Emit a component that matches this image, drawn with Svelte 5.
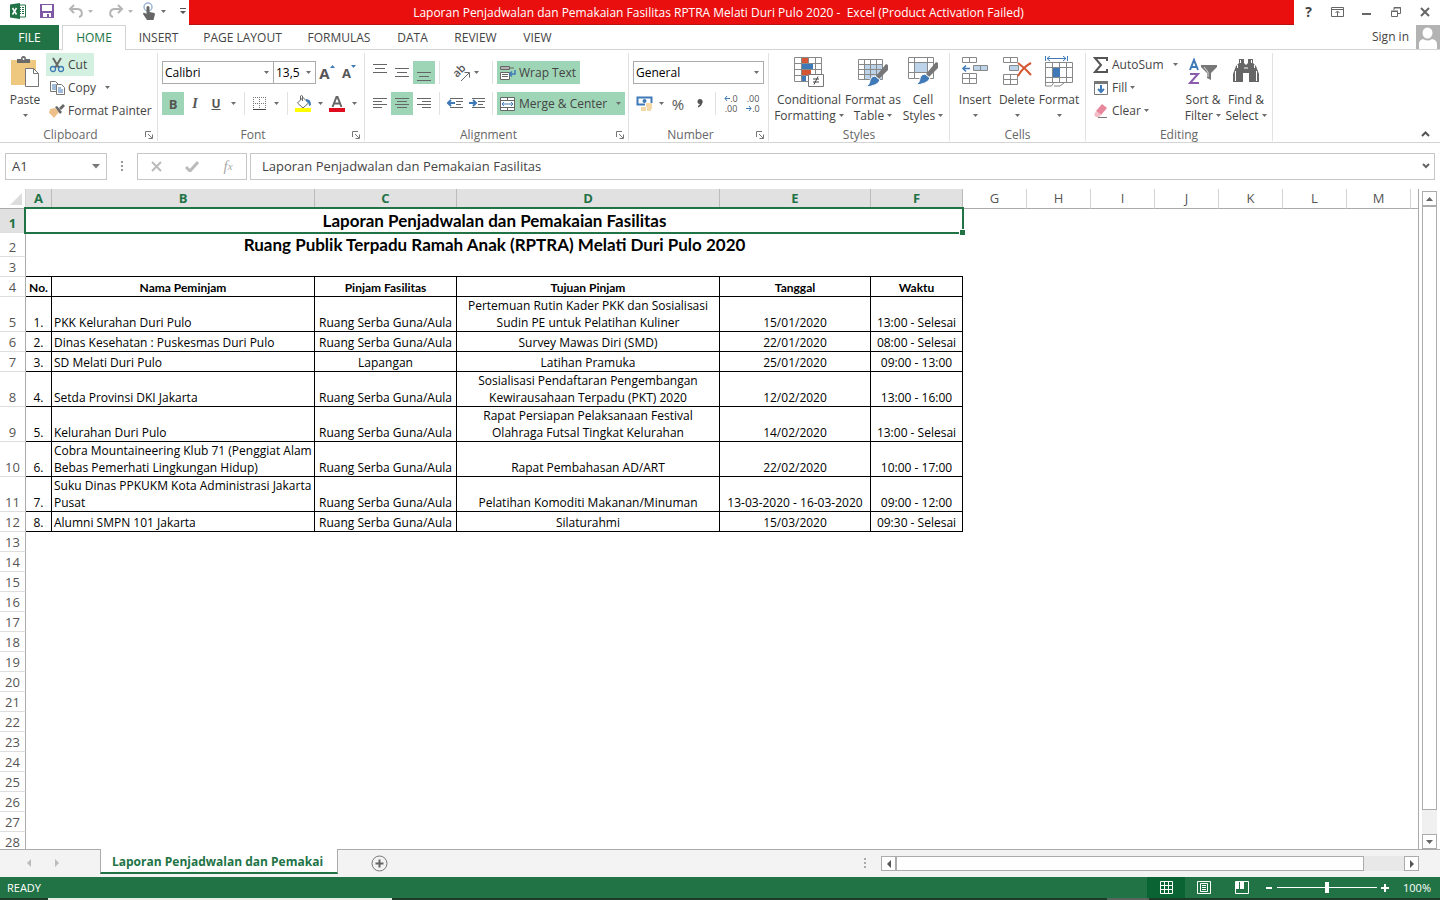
<script>
  const tabs = ['HOME', 'INSERT', 'PAGE LAYOUT', 'FORMULAS', 'DATA', 'REVIEW', 'VIEW'];
  const selectedColumns = ['A', 'B', 'C', 'D', 'E', 'F'];
  const otherColumns = ['G', 'H', 'I', 'J', 'K', 'L', 'M'];
  const headings = ['No.', 'Nama Peminjam', 'Pinjam Fasilitas', 'Tujuan Pinjam', 'Tanggal', 'Waktu'];
  const aula = 'Ruang Serba Guna/Aula';
  const rows = [
    ['PKK Kelurahan Duri Pulo', aula, 'Pertemuan Rutin Kader PKK dan Sosialisasi\nSudin PE untuk Pelatihan Kuliner', '15/01/2020', '13:00 - Selesai'],
    ['Dinas Kesehatan : Puskesmas Duri Pulo', aula, 'Survey Mawas Diri (SMD)', '22/01/2020', '08:00 - Selesai'],
    ['SD Melati Duri Pulo', 'Lapangan', 'Latihan Pramuka', '25/01/2020', '09:00 - 13:00'],
    ['Setda Provinsi DKI Jakarta', aula, 'Sosialisasi Pendaftaran Pengembangan\nKewirausahaan Terpadu (PKT) 2020', '12/02/2020', '13:00 - 16:00'],
    ['Kelurahan Duri Pulo', aula, 'Rapat Persiapan Pelaksanaan Festival\nOlahraga Futsal Tingkat Kelurahan', '14/02/2020', '13:00 - Selesai'],
    ['Cobra Mountaineering Klub 71 (Penggiat Alam\nBebas Pemerhati Lingkungan Hidup)', aula, 'Rapat Pembahasan AD/ART', '22/02/2020', '10:00 - 17:00'],
    ['Suku Dinas PPKUKM Kota Administrasi Jakarta\nPusat', aula, 'Pelatihan Komoditi Makanan/Minuman', '13-03-2020 - 16-03-2020', '09:00 - 12:00'],
    ['Alumni SMPN 101 Jakarta', aula, 'Silaturahmi', '15/03/2020', '09:30 - Selesai']
  ];
  const emptyRows = Array.from({ length: 16 }, (_, i) => i + 13);
  let zoom = $state(50);
  let formula = $state('Laporan Penjadwalan dan Pemakaian Fasilitas');
</script>

{#snippet caret()}
  <svg class="caret" width="5" height="3" viewBox="0 0 5 3"><path d="M0 0h5L2.500 3z" fill="#6d6d6d" /></svg>
{/snippet}

{#snippet launcher(name)}
  <button class="launcher" aria-label={name}>
    <svg width="8" height="8" viewBox="0 0 8 8" fill="none" stroke="#777"><path d="M.5 6V.5H6M3 3l4 4M7.500 3.500v4h-4" /></svg>
  </button>
{/snippet}

{#snippet lines(widths, align)}
  <svg width="14" height="11" viewBox="0 0 14 11" fill="#666">
    {#each widths as w, i}
      <rect x={align === 'left' ? 0 : align === 'right' ? 14 - w : (14 - w) / 2} y={widths.length === 3 ? i * 4 + 1 : i * 3} width={w} height="1" />
    {/each}
  </svg>
{/snippet}

<div class="app">
  <header class="titlebar">
    <div class="quick">
      <svg width="16" height="16" viewBox="0 0 16 16">
        <path d="M8 2h7.500v12H8" fill="#fff" stroke="#217346" />
        <path d="M9 4h2v1H9zm3 0h2v1h-2zM9 6h2v1H9zm3 0h2v1h-2zM9 8h2v1H9zm3 0h2v1h-2zM9 10h2v1H9zm3 0h2v1h-2z" fill="#217346" />
        <path d="M0 1.500L10 0v16L0 14.500z" fill="#217346" />
        <path d="M2.500 5l4 6.500M6.500 5l-4 6.500" stroke="#fff" stroke-width="1.500" />
      </svg>
      <button aria-label="Save">
        <svg width="14" height="14" viewBox="0 0 14 14"><path d="M0 0h14v14H0z" fill="#7e57a5" /><path d="M2 1h10v6H2zM3 9h8v4H9v-3H7v3H3z" fill="#fff" /></svg>
      </button>
      <button aria-label="Undo">
        <svg width="16" height="14" viewBox="0 0 16 14" fill="none" stroke="#b5b5b5" stroke-width="2"><path d="M6 1L2 5l4 4M2 5h7c6 0 6 7 2 8" /></svg>
      </button>
      <button class="dim" aria-label="Undo history">{@render caret()}</button>
      <button aria-label="Redo">
        <svg width="16" height="14" viewBox="0 0 16 14" fill="none" stroke="#b5b5b5" stroke-width="2"><path d="M10 1l4 4-4 4M14 5H7c-6 0-6 7-2 8" /></svg>
      </button>
      <button class="dim" aria-label="Redo history">{@render caret()}</button>
      <button aria-label="Touch or mouse mode">
        <svg width="14" height="18" viewBox="0 0 14 18"><circle cx="6" cy="5" r="4" fill="none" stroke="#9db6d2" stroke-width="1.500" /><path d="M4.500 5q1.500-2 3 0v5l5 1q1 1 0 3l-1 4H5l-4-6q0-2 2-1l1.500 1z" fill="#666" /></svg>
      </button>
      <button aria-label="Touch or mouse options">{@render caret()}</button>
      <button aria-label="Customize toolbar">
        <svg width="6" height="7" viewBox="0 0 6 7" fill="#555"><path d="M0 0h6v1H0zM0 3h6L3 6z" /></svg>
      </button>
    </div>
    <div class="title">Laporan Penjadwalan dan Pemakaian Fasilitas RPTRA Melati Duri Pulo 2020 -&nbsp; Excel (Product Activation Failed)</div>
    <div class="window-buttons">
      <button class="help" aria-label="Help">?</button>
      <button aria-label="Ribbon display options">
        <svg width="13" height="10" viewBox="0 0 13 10" fill="none" stroke="#666"><path d="M.5.5h12v9H.5zM1 2.500h11M6.500 9V4.500M4.500 6l2-2 2 2" /></svg>
      </button>
      <button aria-label="Minimize"><svg width="9" height="10" viewBox="0 0 9 10"><path d="M0 6h9v2H0z" fill="#666" /></svg></button>
      <button aria-label="Restore"><svg width="10" height="10" viewBox="0 0 10 10" fill="none" stroke="#666"><path d="M.5 4.500h6v5h-6zM0 4h7M3 3V.5h6.500v6H7M3 1h7" /></svg></button>
      <button aria-label="Close"><svg width="10" height="10" viewBox="0 0 10 10" stroke="#666" stroke-width="2"><path d="M1 1l8 8M9 1L1 9" /></svg></button>
    </div>
  </header>

  <nav class="tabs">
    <button class="file">FILE</button>
    {#each tabs as tab, i}
      <button class="tab" class:active={i === 0}>{tab}</button>
    {/each}
    <div class="account">
      <a href="#signin">Sign in</a>
      <svg width="24" height="24" viewBox="0 0 24 24"><path d="M0 0h24v24H0z" fill="#b3b3b3" /><ellipse cx="11.500" cy="8" rx="5" ry="5.500" fill="#fff" /><path d="M3 24v-5q0-4 4-5 5 3 9 0 5 1 5 5v5z" fill="#fff" /></svg>
    </div>
  </nav>

  <div class="ribbon">
    <section class="group clipboard">
      <div class="body">
        <button class="big paste">
          <span class="icon">
            <svg width="30" height="32" viewBox="0 0 30 32">
              <path d="M1 4h25v25H1z" fill="#edc87e" />
              <path d="M7 7V3h4q0-3 2.500-3T16 3h4v4z" fill="#6b6b6b" /><circle cx="13.500" cy="3" r="1" fill="#fff" />
              <path d="M15.500 12.500h8l5 5v13h-13z" fill="#fff" stroke="#777" /><path d="M23.500 12.500v5h5" fill="none" stroke="#777" />
            </svg>
          </span>
          <span>Paste</span><span>{@render caret()}</span>
        </button>
        <div class="stack">
          <button class="small hot">
            <svg width="16" height="16" viewBox="0 0 16 16" fill="none"><path d="M4 1l6 10M12 1L6 11" stroke="#666" stroke-width="2" /><circle cx="4" cy="12" r="2.500" stroke="#3f79b7" stroke-width="1.300" /><circle cx="12" cy="12" r="2.500" stroke="#3f79b7" stroke-width="1.300" /></svg>Cut
          </button>
          <button class="small">
            <svg width="16" height="16" viewBox="0 0 16 16"><path d="M1.500 1.500h5l3 3v7h-8z" fill="#fff" stroke="#777" /><path d="M3 5h4M3 7h4M3 9h4" stroke="#3f79b7" /><path d="M7.500 4.500h5l3 3v7h-8z" fill="#fff" stroke="#777" /><path d="M9 8h3M9 10h5M9 12h5" stroke="#3f79b7" /></svg>Copy <span class="far">{@render caret()}</span>
          </button>
          <button class="small painter">
            <svg width="16" height="16" viewBox="0 0 16 16"><path d="M1 6l5-1 4 4-5 6q-2-3-5-5z" fill="#edc08a" /><path d="M6 4l2-1 5 6-2 2z" fill="#666" /><path d="M10 5l4-4 2 2-4 4z" fill="#666" /></svg>Format Painter
          </button>
        </div>
      </div>
      <footer><span>Clipboard</span>{@render launcher('Clipboard settings')}</footer>
    </section>

    <section class="group font">
      <div class="body tools">
        <div class="row">
          <label class="combo family"><select aria-label="Font"><option>Calibri</option></select>{@render caret()}</label>
          <label class="combo size"><select aria-label="Font size"><option>13,5</option></select>{@render caret()}</label>
          <button class="tool grow" aria-label="Increase font size"><b>A</b><svg width="5" height="3" viewBox="0 0 5 3"><path d="M0 3h5L2.500 0z" fill="#3f79b7" /></svg></button>
          <button class="tool shrink" aria-label="Decrease font size"><b>A</b><svg width="5" height="3" viewBox="0 0 5 3"><path d="M0 0h5L2.500 3z" fill="#3f79b7" /></svg></button>
        </div>
        <div class="row">
          <button class="tool on" aria-label="Bold"><b>B</b></button>
          <button class="tool italic" aria-label="Italic">I</button>
          <button class="tool underline" aria-label="Underline">U</button>
          <button class="drop" aria-label="Underline options">{@render caret()}</button>
          <i class="sep"></i>
          <button class="tool borders" aria-label="Borders"><svg width="13" height="13" viewBox="0 0 13 13" fill="none" stroke="#777"><path d="M0 .5h13M0 6.500h13M.5 0v12M6.500 0v12M12.500 0v12" stroke-dasharray="1 1" /><path d="M0 12.500h13" stroke="#444" /></svg></button>
          <button class="drop" aria-label="Border options">{@render caret()}</button>
          <i class="sep"></i>
          <button class="tool" aria-label="Fill color"><svg width="18" height="17" viewBox="0 0 18 17"><path d="M1 13h16v4H1z" fill="#ff0" /><path d="M3.500 8L9 2.500 14.500 8 9 13z" fill="#fff" stroke="#666" /><path d="M8.500 6V1q-1-1-2 0v4" fill="none" stroke="#666" /><path d="M12 4q5 0 5 6l-2 1q0-4-3-5z" fill="#3f79b7" /></svg></button>
          <button class="drop near" aria-label="Fill options">{@render caret()}</button>
          <button class="tool" aria-label="Font color"><svg width="16" height="17" viewBox="0 0 16 17"><path d="M0 13h16v4H0z" fill="#e00b1c" /><path d="M3.500 12L7.500 2h1l4 10M5 8.500h6" fill="none" stroke="#666" stroke-width="2" /></svg></button>
          <button class="drop near" aria-label="Font color options">{@render caret()}</button>
        </div>
      </div>
      <footer><span>Font</span>{@render launcher('Font settings')}</footer>
    </section>

    <section class="group alignment">
      <div class="body tools">
        <div class="row">
          <button class="tool top" aria-label="Top align">{@render lines([14, 10, 14], 'mid')}</button>
          <button class="tool" aria-label="Middle align">{@render lines([14, 10, 14], 'mid')}</button>
          <button class="tool low on" aria-label="Bottom align">{@render lines([14, 10, 14], 'mid')}</button>
          <i class="sep"></i>
          <button class="tool wide" aria-label="Orientation">
            <svg class="orientation" width="18" height="18" viewBox="0 0 18 18"><path d="M8 17l8-8M11.500 8.500h5v5" fill="none" stroke="#666" /><text x="4" y="14" transform="rotate(-45 4 14)" font-size="11" font-weight="600" fill="#555">ab</text></svg>{@render caret()}
          </button>
          <i class="sep"></i>
          <button class="labeled on">
            <svg width="16" height="16" viewBox="0 0 16 16"><path d="M.5 1.500h9v3h-9zM.5 7.500h9v7h-9z" fill="#fff" stroke="#666" /><path d="M0 3h9M9 3h5M2 9.500h6M2 11.500h6" stroke="#666" /><path d="M15 5v4h-5M12 6.500L9.500 9l2.500 2.500" fill="none" stroke="#3f79b7" stroke-width="1.500" /></svg>Wrap Text
          </button>
        </div>
        <div class="row">
          <button class="tool" aria-label="Align left">{@render lines([14, 9, 14, 9], 'left')}</button>
          <button class="tool on" aria-label="Center">{@render lines([14, 10, 14, 10], 'mid')}</button>
          <button class="tool" aria-label="Align right">{@render lines([14, 9, 14, 9], 'right')}</button>
          <i class="sep"></i>
          <button class="tool" aria-label="Decrease indent"><svg width="16" height="11" viewBox="0 0 16 11"><path d="M3 .5h13M9 3.500h7M9 6.500h5M3 9.500h13" stroke="#666" /><path d="M8 5H1M4 2L1 5l3 3" fill="none" stroke="#3f79b7" stroke-width="2" /></svg></button>
          <button class="tool" aria-label="Increase indent"><svg width="16" height="11" viewBox="0 0 16 11"><path d="M3 .5h13M9 3.500h7M9 6.500h5M3 9.500h13" stroke="#666" /><path d="M0 5h7M4 2l3 3-3 3" fill="none" stroke="#3f79b7" stroke-width="2" /></svg></button>
          <i class="sep"></i>
          <button class="labeled on">
            <svg width="16" height="16" viewBox="0 0 16 16"><path d="M.5 1.500h14v13H.5zM0 4.500h15M0 11.500h15M7.500 1v3M7.500 12v3" fill="#fff" stroke="#666" /><path d="M2 8h11M4 6L2 8l2 2M11 6l2 2-2 2" fill="none" stroke="#3f79b7" /></svg>Merge &amp; Center <span class="far">{@render caret()}</span>
          </button>
        </div>
      </div>
      <footer><span>Alignment</span>{@render launcher('Alignment settings')}</footer>
    </section>

    <section class="group number">
      <div class="body tools">
        <div class="row">
          <label class="combo format"><select aria-label="Number format"><option>General</option></select>{@render caret()}</label>
        </div>
        <div class="row">
          <button class="tool" aria-label="Accounting format"><svg width="17" height="16" viewBox="0 0 17 16"><path d="M1.500 1.500h14v7h-14z" fill="#fff" stroke="#3f79b7" stroke-width="2" /><circle cx="8.500" cy="5" r="2" fill="#3f79b7" /><path d="M9 7h8v9H5v-4h4z" fill="#fff" /><path d="M10 8h6M10 10h6M5 12h5M5 14h5M11 12h5M11 14h4" stroke="#e8b050" /></svg></button>
          <button class="drop near" aria-label="Currency options">{@render caret()}</button>
          <button class="tool percent" aria-label="Percent">%</button>
          <button class="tool" aria-label="Comma style"><svg width="6" height="10" viewBox="0 0 6 10"><circle cx="3" cy="2.500" r="2.500" fill="#555" /><path d="M5.500 2q0 5-4.500 6.500V7q2-1 2-3z" fill="#555" /></svg></button>
          <i class="sep"></i>
          <button class="tool decimal" aria-label="Increase decimal"><span><svg width="6" height="5" viewBox="0 0 6 5"><path d="M6 2.500H1M3 0L1 2.500 3 5" fill="none" stroke="#3f79b7" /></svg>.0</span><span>.00</span></button>
          <button class="tool decimal" aria-label="Decrease decimal"><span>.00</span><span><svg width="6" height="5" viewBox="0 0 6 5"><path d="M0 2.500h5M3 0l2 2.500L3 5" fill="none" stroke="#3f79b7" /></svg>.0</span></button>
        </div>
      </div>
      <footer><span>Number</span>{@render launcher('Number settings')}</footer>
    </section>

    <section class="group styles">
      <div class="body">
        <button class="big conditional">
          <span class="icon">
            <svg width="30" height="32" viewBox="0 0 30 32"><path d="M.5 1.500h27v24H.5zM0 7.500h28M0 13.500h28M0 19.500h28M7.500 1v25M14.500 1v25M21.500 1v25" fill="#fff" stroke="#888" /><path d="M8 2h6v5H8zM8 14h9v5H8z" fill="#d65532" /><path d="M8 8h11v5H8z" fill="#3f79b7" /><path d="M8 20h4v5H8z" fill="#3f79b7" /><path d="M14.500 18.500h15v12h-15z" fill="#fff" stroke="#777" /><path d="M19 23h6M19 26h6M24 20.500l-4 8" stroke="#444" /></svg>
          </span>
          <span>Conditional</span><span>Formatting {@render caret()}</span>
        </button>
        <button class="big as-table">
          <span class="icon">
            <svg width="30" height="32" viewBox="0 0 30 32"><path d="M7 9h18v14H7z" fill="#bdd3ea" /><path d="M.5 3.500h24v20H.5zM0 8.500h25M0 13.500h25M0 18.500h25M6.500 3v21M12.500 3v21M18.500 3v21" fill="none" stroke="#888" /><path d="M28 8l2 1v5l-9 9-3-3z" fill="#777" /><path d="M17 20l5 4q-2 6-15 7 5-2 5-7 1-4 5-4z" fill="#3f79b7" stroke="#fff" /></svg>
          </span>
          <span>Format as</span><span>Table {@render caret()}</span>
        </button>
        <button class="big cell-styles">
          <span class="icon">
            <svg width="30" height="32" viewBox="0 0 30 32"><path d="M.5 1.500h25v21H.5zM0 6.500h26M0 16.500h26M6.500 1v22M19.500 1v22" fill="#fff" stroke="#888" /><path d="M7 7h12v9H7z" fill="#bdd3ea" /><path d="M28 6l2 1v5l-9 9-3-3z" fill="#777" /><path d="M17 18l5 4q-2 6-15 7 5-2 5-7 1-4 5-4z" fill="#3f79b7" stroke="#fff" /></svg>
          </span>
          <span>Cell</span><span>Styles {@render caret()}</span>
        </button>
      </div>
      <footer><span>Styles</span></footer>
    </section>

    <section class="group cells">
      <div class="body">
        <button class="big">
          <span class="icon">
            <svg width="28" height="32" viewBox="0 0 28 32" fill="#fff" stroke="#888"><path d="M1.500 1.500h14v5h-14zM8.500 1v6M1.500 17.500h14v10h-14zM1 22.500h15M8.500 17v11" /><path d="M12.500 9.500h14v5h-14zM19.500 9v6" fill="#bdd3ea" /><path d="M9 12.500H2M5 9.500l-3 3 3 3" fill="none" stroke="#3f79b7" stroke-width="1.500" /></svg>
          </span>
          <span>Insert</span><span>{@render caret()}</span>
        </button>
        <button class="big">
          <span class="icon">
            <svg width="30" height="32" viewBox="0 0 30 32" fill="#fff" stroke="#888"><path d="M1.500 1.500h14v5h-14zM8.500 1v6M1.500 18.500h14v10h-14zM1 23.500h15M8.500 18v11" /><path d="M7.500 9.500h9v5h-9z" fill="#bdd3ea" /><path d="M16 7q7 5 13 12M29 7q-8 4-13 13" fill="none" stroke="#d65532" stroke-width="2" /></svg>
          </span>
          <span>Delete</span><span>{@render caret()}</span>
        </button>
        <button class="big">
          <span class="icon">
            <svg width="28" height="32" viewBox="0 0 28 32" fill="none" stroke="#888"><path d="M.5 6.500h27v20H.5zM0 11.500h28M0 21.500h28M7.500 6v21M14.500 6v21M21.500 6v21M.5 26v4h6l2-3M9 30h6l4-3" /><path d="M8 12h7v9H8z" fill="#3f79b7" stroke="none" /><path d="M.5 0v5M22.500 0v5M2 2.500h19M5 0L2 2.500 5 5M18 0l3 2.500L18 5" stroke="#3f79b7" /></svg>
          </span>
          <span>Format</span><span>{@render caret()}</span>
        </button>
      </div>
      <footer><span>Cells</span></footer>
    </section>

    <section class="group editing">
      <div class="body">
        <div class="stack">
          <button class="small">
            <svg width="16" height="16" viewBox="0 0 16 16"><path d="M14 4V1H2l6 7-6 7h12v-3" fill="none" stroke="#555" stroke-width="2" /></svg>AutoSum <span class="far">{@render caret()}</span>
          </button>
          <button class="small">
            <svg width="16" height="16" viewBox="0 0 16 16"><path d="M1.500 1.500h13v13h-13z" fill="#fff" stroke="#777" /><path d="M1 1h14v3H1z" fill="#777" /><path d="M8 5v7M5 9l3 3 3-3" fill="none" stroke="#3f79b7" stroke-width="2" /></svg>Fill {@render caret()}
          </button>
          <button class="small">
            <svg width="16" height="16" viewBox="0 0 16 16"><path d="M9 1l5 4-6 7-5-4z" fill="#e8879b" /><path d="M3 8l5 4-2 2H3l-2-2z" fill="#f3bcc7" /><path d="M5 14.500h9" stroke="#777" /></svg>Clear {@render caret()}
          </button>
        </div>
        <button class="big sort">
          <span class="icon">
            <svg width="30" height="32" viewBox="0 0 30 32" fill="none"><path d="M2 14L6 4l4 10M3 11h6" stroke="#3f79b7" stroke-width="2" /><path d="M2 18h8l-8 9h9" stroke="#8a5cae" stroke-width="2" /><path d="M13 9h16v2l-6 6v7l-4-2v-5l-6-6z" fill="#777" /><path d="M16 11l4 5v5" stroke="#ddd" /></svg>
          </span>
          <span>Sort &amp;</span><span>Filter {@render caret()}</span>
        </button>
        <button class="big find">
          <span class="icon">
            <svg width="26" height="32" viewBox="0 0 26 32" fill="#666"><path d="M6 3h5v4l2 2 2-2V3h5v4l3 3 3 8v8H16v-9h-6v9H0v-8l3-8 3-3z" /><path d="M7.500 4v3M4.500 9v3M2.500 15v10M18.500 4v3M21.500 9v3M23.500 15v10M11 12h4" stroke="#fff" /></svg>
          </span>
          <span>Find &amp;</span><span>Select {@render caret()}</span>
        </button>
      </div>
      <footer><span>Editing</span></footer>
    </section>
    <button class="collapse" aria-label="Collapse ribbon"><svg width="9" height="6" viewBox="0 0 9 6"><path d="M1 5l3.500-3.500L8 5" fill="none" stroke="#555" stroke-width="2" /></svg></button>
  </div>

  <div class="formula-bar">
    <div class="name-box"><input aria-label="Name box" value="A1" /><button aria-label="Names"><svg width="8" height="5" viewBox="0 0 8 5"><path d="M0 0h8L4 4.500z" fill="#777" /></svg></button></div>
    <svg class="dots" width="2" height="11" viewBox="0 0 2 11" fill="#999"><path d="M0 0h2v2H0zM0 4h2v2H0zM0 8h2v2H0z" /></svg>
    <div class="entry">
      <button aria-label="Cancel"><svg width="11" height="11" viewBox="0 0 11 11"><path d="M1 1l9 9M10 1l-9 9" stroke="#bbb" stroke-width="2" /></svg></button>
      <button aria-label="Enter"><svg width="14" height="11" viewBox="0 0 14 11"><path d="M1 6l4 4 8-9" fill="none" stroke="#bbb" stroke-width="3" /></svg></button>
      <button class="fx" aria-label="Insert function">f<sub>x</sub></button>
    </div>
    <div class="formula"><input aria-label="Formula" bind:value={formula} /><button aria-label="Expand formula bar"><svg width="8" height="6" viewBox="0 0 8 6"><path d="M1 1l3 3 3-3" fill="none" stroke="#666" stroke-width="2" /></svg></button></div>
  </div>

  <div class="workspace">
    <div class="sheet">
      <table>
        <colgroup>
          <col class="w-rows" /><col class="w-a" /><col class="w-b" /><col class="w-c" /><col class="w-b" /><col class="w-e" /><col class="w-f" />
          {#each otherColumns as c}<col class="w-other" />{/each}
          <col />
        </colgroup>
        <thead>
          <tr>
            <th class="corner" aria-label="Select all"><svg width="12" height="12" viewBox="0 0 12 12"><path d="M12 0v12H0z" fill="#dcdcdc" /></svg></th>
            {#each selectedColumns as c}<th class="picked" scope="col">{c}</th>{/each}
            {#each otherColumns as c}<th scope="col">{c}</th>{/each}
            <th class="rest"></th>
          </tr>
        </thead>
        <tbody>
          <tr class="headline"><th class="picked" scope="row">1</th><td class="merged selected" colspan="6">Laporan Penjadwalan dan Pemakaian Fasilitas</td></tr>
          <tr class="headline"><th scope="row">2</th><td class="merged" colspan="6">Ruang Publik Terpadu Ramah Anak (RPTRA) Melati Duri Pulo 2020</td></tr>
          <tr><th scope="row">3</th><td class="above" colspan="6"></td></tr>
          <tr class="data heads"><th scope="row">4</th>{#each headings as h}<td>{h}</td>{/each}</tr>
          {#each rows as row, i}
            <tr class="data"><th scope="row">{i + 5}</th><td>{i + 1}.</td>{#each row as cell, j}<td class:left={j === 0}>{cell}</td>{/each}</tr>
          {/each}
          {#each emptyRows as n}<tr><th scope="row">{n}</th></tr>{/each}
        </tbody>
      </table>
    </div>
    <div class="vscroll">
      <button aria-label="Scroll up"><svg width="7" height="4" viewBox="0 0 7 4"><path d="M0 4h7L3.500 0z" fill="#666" /></svg></button>
      <div class="thumb"></div>
      <div class="track"></div>
      <button aria-label="Scroll down"><svg width="7" height="4" viewBox="0 0 7 4"><path d="M0 0h7L3.500 4z" fill="#666" /></svg></button>
    </div>
  </div>

  <div class="sheetbar">
    <div class="arrows">
      <button aria-label="Previous sheet"><svg width="4" height="8" viewBox="0 0 4 8"><path d="M4 0v8L0 4z" fill="#bbb" /></svg></button>
      <button aria-label="Next sheet"><svg width="4" height="8" viewBox="0 0 4 8"><path d="M0 0v8l4-4z" fill="#bbb" /></svg></button>
    </div>
    <button class="sheet-tab">Laporan Penjadwalan dan Pemakai</button>
    <button class="add" aria-label="New sheet"><svg width="17" height="17" viewBox="0 0 17 17" fill="none" stroke="#777"><circle cx="8.500" cy="8.500" r="7.500" /><path d="M8.500 4.500v8M4.500 8.500h8" stroke="#666" stroke-width="2" /></svg></button>
    <div class="hscroll">
      <svg width="2" height="11" viewBox="0 0 2 11" fill="#aaa"><path d="M0 0h2v2H0zM0 4h2v2H0zM0 8h2v2H0z" /></svg>
      <button class="first" aria-label="Scroll left"><svg width="4" height="8" viewBox="0 0 4 8"><path d="M4 0v8L0 4z" fill="#555" /></svg></button>
      <div class="thumb"></div>
      <div class="track"></div>
      <button aria-label="Scroll right"><svg width="4" height="8" viewBox="0 0 4 8"><path d="M0 0v8l4-4z" fill="#555" /></svg></button>
    </div>
  </div>

  <footer class="status">
    <span>READY</span>
    <div class="views">
      <button class="current" aria-label="Normal view"><svg width="13" height="13" viewBox="0 0 13 13" fill="none" stroke="#fff"><path d="M.5.5h12v12H.5zM0 4.500h13M0 8.500h13M4.500 0v13M8.500 0v13" /></svg></button>
      <button aria-label="Page layout view"><svg width="14" height="13" viewBox="0 0 14 13" fill="none" stroke="#fff"><path d="M.5.5h13v12H.5zM3.500 2.500h7v8h-7zM5 4.500h4M5 6.500h4M5 8.500h4" /></svg></button>
      <button aria-label="Page break preview"><svg width="14" height="13" viewBox="0 0 14 13"><path d="M.5.5h13v12H.5z" fill="none" stroke="#fff" /><path d="M1 1h3v7H1zM5 1h4v7H5z" fill="#fff" /></svg></button>
    </div>
    <button class="step" aria-label="Zoom out"><svg width="8" height="8" viewBox="0 0 8 8"><path d="M1 3h6v2H1z" fill="#fff" /></svg></button>
    <input type="range" aria-label="Zoom" bind:value={zoom} />
    <button class="step" aria-label="Zoom in"><svg width="8" height="8" viewBox="0 0 8 8"><path d="M0 3h3V0h2v3h3v2H5v3H3V5H0z" fill="#fff" /></svg></button>
    <span class="percent-label">100%</span>
  </footer>
  <div class="taskbar-edge"><i></i><i class="light"></i><i></i><i class="mid"></i><i class="end"></i></div>
</div>

<style>
  :global(body) { margin: 0; overflow: hidden; }
  .app { display: flex; flex-direction: column; height: 100vh; overflow: hidden; background: #fff; color: #444; font: 12px/16px "Open Sans", "Noto Sans", sans-serif; }
  .app *, .app *::before, .app *::after { box-sizing: border-box; }
  button, input, select { margin: 0; padding: 0; border: 0; background: none; color: inherit; font: inherit; border-radius: 0; outline: 0; }
  button { display: flex; align-items: center; justify-content: center; white-space: nowrap; }
  svg { display: block; flex: none; }
  a { color: inherit; text-decoration: none; }
  .caret { display: inline-block; vertical-align: 3px; }

  .titlebar { display: flex; flex: 0 0 25px; }
  .quick { display: grid; grid-template-columns: 30px 28px 20px 20px 20px 14px 19px 19px 9px; align-items: center; padding: 0 0 3px 10px; }
  .quick button { justify-content: flex-start; }
  .dim { opacity: .5; }
  .title { flex: 1; background: #ea0f0f; border-bottom: 1px solid #b51212; color: #fff; text-align: center; line-height: 22px; white-space: nowrap; overflow: hidden; padding: 2px 46px 0 0; }
  .window-buttons { display: grid; grid-template-columns: repeat(5, 29px); padding: 0 1px 2px 0; }
  .help { font-weight: 700; font-size: 14px; }

  .tabs { display: grid; grid-template-columns: 62px 64px 65px 103px 90px 57px 69px 55px 1fr; flex: 0 0 25px; border-bottom: 1px solid #d4d4d4; }
  .file { background: #217346; color: #fff; margin: 0 3px -1px 0; }
  .tab { padding-top: 1px; }
  .tab.active { padding-top: 0; border: 1px solid #d4d4d4; border-bottom: 0; margin-bottom: -1px; background: #fff; color: #217346; }
  .account { display: flex; justify-content: flex-end; align-items: center; gap: 7px; }

  .ribbon { display: flex; flex: 0 0 93px; border-bottom: 1px solid #d4d4d4; padding: 3px 0 1px; }
  .group { display: flex; flex-direction: column; min-width: 0; border-right: 1px solid #e1e1e1; padding-left: 4px; }
  .clipboard { flex: 0 0 158px; }
  .font { flex: 0 0 207px; }
  .alignment { flex: 0 0 264px; }
  .number { flex: 0 0 140px; }
  .styles { flex: 0 0 181px; }
  .cells { flex: 0 0 136px; }
  .editing { flex: 0 0 187px; }
  .body { display: flex; flex: 1; align-items: flex-start; }
  .tools { flex-direction: column; gap: 8px; padding-top: 8px; }
  .row { display: flex; height: 23px; }
  .group footer { display: flex; align-items: center; height: 14px; padding-top: 2px; color: #666; margin-left: -4px; }
  .group footer span { flex: 1; text-align: center; }
  .launcher { width: 16px; height: 12px; }

  .big { flex-direction: column; justify-content: flex-start; width: 42px; padding-top: 2px; }
  .big .icon { height: 37px; padding-top: 1px; display: flex; }
  .big.conditional { width: 72px; }
  .big.as-table { width: 56px; }
  .big.cell-styles, .big.sort { width: 44px; }
  .big > span { min-height: 16px; }
  .stack { display: flex; flex-direction: column; align-items: flex-start; }
  .editing .stack { width: 91px; }
  .small { height: 23px; padding: 0 7px 0 3px; gap: 3px; }
  .painter { padding-right: 0; }
  .hot { background: #d3f0e0; }
  .far { margin-left: 6px; }

  .tool { width: 22px; height: 23px; color: #555; }
  .on { background: #9fd5b7; }
  .top { padding-bottom: 8px; }
  .low { padding-top: 8px; }
  .italic { font: italic 700 14px/20px "Liberation Serif", serif; }
  .underline { width: 20px; font-weight: 700; text-decoration: underline; }
  .borders { width: 20px; }
  .tool b { font-size: 13px; }
  .grow, .shrink { align-items: flex-start; padding-top: 4px; }
  .tool.grow b { font-size: 15px; }
  .drop { width: 14px; height: 23px; }
  .drop.near { width: 12px; }
  .sep { width: 1px; margin: 0 4px; background: #e1e1e1; }
  .wide { width: 44px; gap: 3px; }
  .orientation { overflow: visible; }
  .labeled { padding: 0 4px 0 3px; gap: 3px; color: #444; }
  .percent { font-size: 15px; }
  .decimal { flex-direction: column; font-size: 9px; line-height: 10px; }
  .decimal span { display: flex; align-items: center; }

  .combo { display: grid; align-items: center; border: 1px solid #ababab; height: 23px; color: #000; }
  .combo select, .combo > :global(.caret) { grid-area: 1 / 1; }
  .combo select { appearance: none; width: 100%; padding-left: 2px; }
  .combo :global(.caret) { justify-self: end; margin-right: 4px; pointer-events: none; }
  .family { width: 112px; margin-right: -1px; }
  .size { width: 43px; }
  .format { width: 131px; }
  .collapse { margin-left: auto; align-self: flex-end; width: 29px; height: 14px; }

  .formula-bar { display: flex; align-items: center; flex: 0 0 46px; padding: 0 5px; font-size: 13px; }
  .name-box, .entry, .formula { display: flex; height: 27px; border: 1px solid #c6c6c6; }
  .name-box { width: 102px; }
  .name-box input { flex: 1; min-width: 0; padding-left: 6px; }
  .name-box button { width: 20px; }
  .dots { margin: 0 14px; }
  .entry { width: 110px; margin-right: 3px; }
  .entry button { flex: 1; }
  .fx { font: italic 15px/16px "Liberation Serif", serif; color: #aaa; }
  .fx sub { font-size: 11px; line-height: 8px; }
  .formula { flex: 1; }
  .formula input { flex: 1; padding-left: 11px; }
  .formula button { width: 16px; }

  .workspace { display: flex; flex: 1; min-height: 0; }
  .sheet { flex: 1; min-width: 0; overflow: hidden; }
  table { table-layout: fixed; width: 100%; border-spacing: 0; border-right: 1px solid #ababab; font: 12px/17px "Open Sans", "Noto Sans", sans-serif; color: #000; }
  .w-rows, .w-a { width: 26px; }
  .w-b { width: 263px; }
  .w-c { width: 142px; }
  .w-e { width: 151px; }
  .w-f { width: 92px; }
  .w-other { width: 64px; }
  th, td { padding: 0; height: 20px; }
  th { font: 13px/18px "Open Sans", "Noto Sans", sans-serif; color: #555; }
  thead th { vertical-align: top; border-right: 1px solid #d4d4d4; border-bottom: 1px solid #ababab; }
  thead .picked { background: #e1e1e1; color: #217346; font-weight: 700; border-right-color: #bbb; }
  thead .rest { border-right: 0; }
  .corner svg { margin: 4px 0 0 10px; }
  tbody th { vertical-align: bottom; border-right: 1px solid #ababab; border-bottom: 1px solid #dedede; }
  tbody th.picked { background: #e1e1e1; color: #217346; font-weight: 700; }
  .headline th, .headline td { height: 24px; }
  .merged { position: relative; vertical-align: middle; text-align: center; font: 700 17px/20px Lato, sans-serif; }
  .selected::after { content: ""; position: absolute; inset: -2px -1px -1px -2px; border: 2px solid #217346; }
  .selected::before { content: ""; position: absolute; right: -2px; bottom: -2px; z-index: 1; width: 5px; height: 5px; background: #217346; box-shadow: -1px -1px #fff; }
  .above { border-bottom: 1px solid #000; }
  .data td { vertical-align: bottom; text-align: center; white-space: pre; border-right: 1px solid #000; border-bottom: 1px solid #000; }
  .data td.left { text-align: left; padding-left: 2px; }
  .heads td { font-family: Lato, sans-serif; font-weight: 700; }

  .vscroll { display: flex; flex-direction: column; width: 21px; padding: 2px 3px 0; }
  .vscroll button { height: 15px; border: 1px solid #ababab; }
  .vscroll .thumb { flex: 1; border: 1px solid #ababab; }
  .vscroll .track { flex: 0 0 24px; background: #f0f0f0; }

  .sheetbar { display: flex; flex: 0 0 28px; background: #f3f3f3; border-top: 1px solid #ababab; }
  .arrows { display: flex; width: 100px; padding-left: 15px; }
  .arrows button { width: 28px; height: 25px; }
  .sheet-tab { height: 25px; margin-top: -1px; padding: 3px 14px 0 11px; background: #fff; border: 1px solid #ababab; border-top: 0; border-bottom: 2px solid #217346; color: #217346; font-weight: 700; }
  .add { width: 82px; height: 26px; }
  .hscroll { display: flex; align-items: center; margin: 6px 21px 6px auto; width: 555px; }
  .hscroll button { width: 15px; height: 15px; border: 1px solid #ababab; background: #fff; }
  .hscroll .first { margin-left: 15px; }
  .hscroll .thumb { flex: 1; height: 15px; background: #fff; border: 1px solid #ababab; }
  .hscroll .track { width: 40px; height: 15px; background: #e8e8e8; }

  .status { display: flex; align-items: center; flex: 0 0 21px; padding: 0 9px 0 7px; background: #217346; color: #fff; font-size: 11px; }
  .views { display: flex; margin-left: auto; }
  .views button { width: 38px; height: 21px; }
  .current { background: #0a6332; }
  .step { width: 16px; height: 21px; }
  input[type="range"] { appearance: none; width: 100px; height: 10px; background: linear-gradient(#fff, #fff) center / 100% 1px no-repeat; }
  input[type="range"]::-webkit-slider-thumb { appearance: none; width: 4px; height: 11px; background: #fff; }
  .percent-label { width: 38px; text-align: right; }
  .taskbar-edge { display: flex; flex: 0 0 2px; background: #1d3a2a; }
  .taskbar-edge i { flex: 0 0 48px; }
  .taskbar-edge i.light { flex: 0 0 344px; background: #e4efe8; }
  .taskbar-edge i:nth-child(3) { flex: 1; }
  .taskbar-edge i.mid { flex: 0 0 42px; background: #56655d; }
  .taskbar-edge i.end { flex: 0 0 291px; }
</style>
